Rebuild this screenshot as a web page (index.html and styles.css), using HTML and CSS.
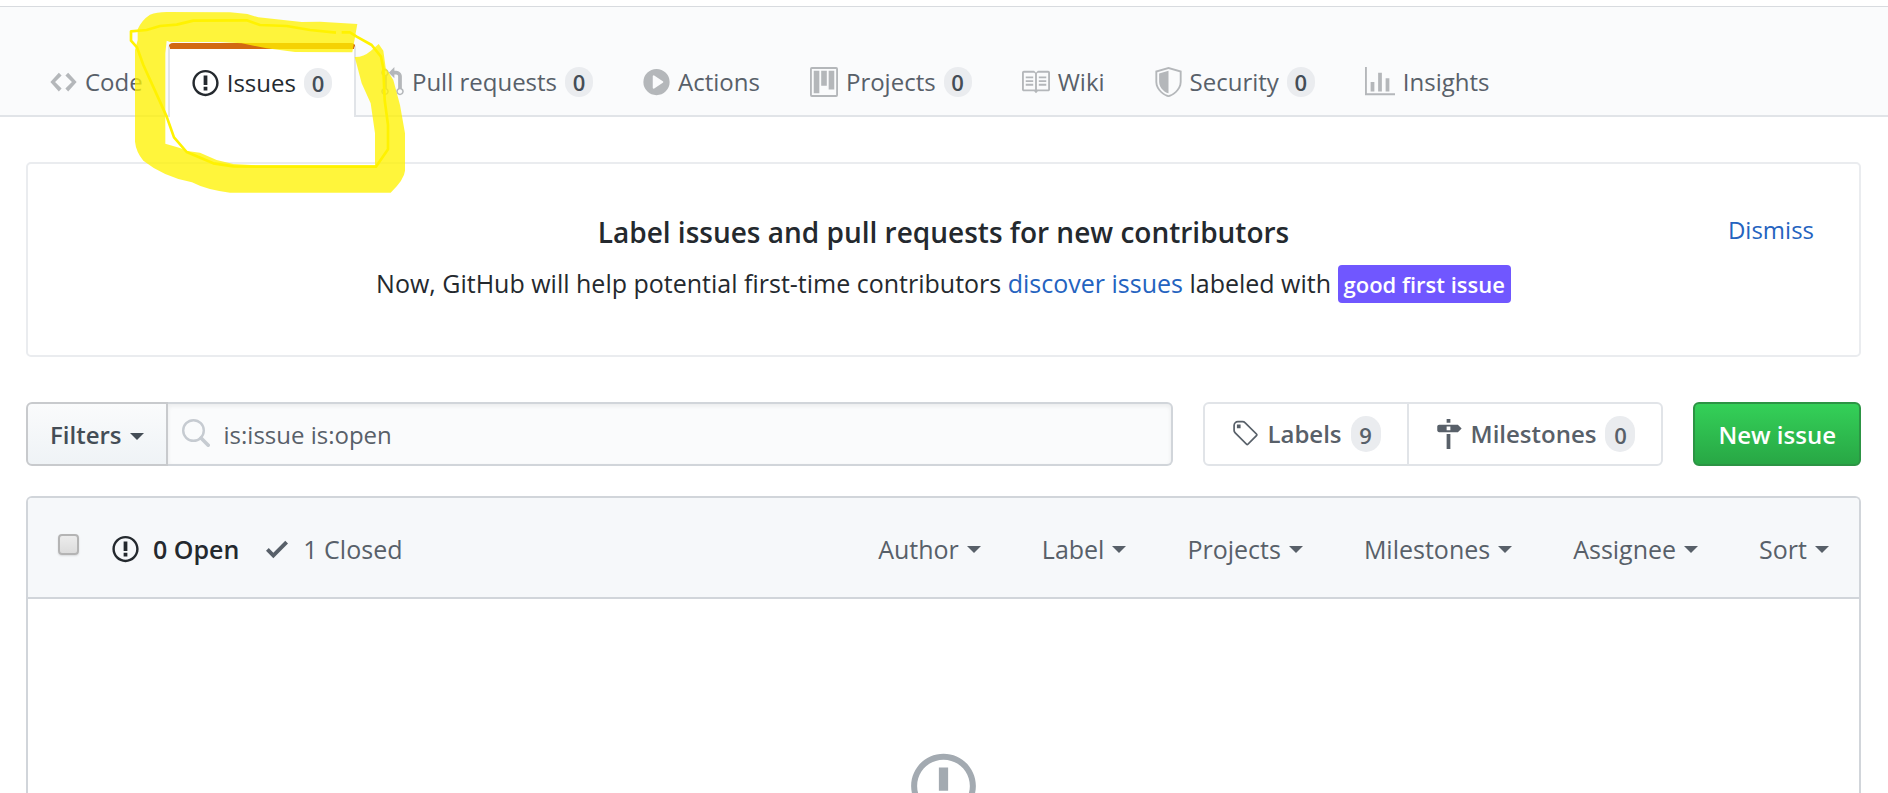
FILE: index.html
```html
<!DOCTYPE html>
<html lang="en">
<head>
<meta charset="utf-8">
<title>Issues</title>
<link rel="stylesheet" href="styles.css">
</head>
<body>
<svg class="sprite" aria-hidden="true">
  <symbol id="code" viewBox="0 0 14 16"><path d="M9.5 3L8 4.5 11.5 8 8 11.5 9.5 13 14 8 9.5 3zm-5 0L0 8l4.5 5L6 11.5 2.5 8 6 4.5 4.5 3z"/></symbol>
  <symbol id="issue" viewBox="0 0 14 16"><path d="M7 2.3c3.14 0 5.7 2.56 5.7 5.7s-2.56 5.7-5.7 5.7A5.71 5.71 0 0 1 1.3 8c0-3.14 2.56-5.7 5.7-5.7zM7 1C3.14 1 0 4.14 0 8s3.14 7 7 7 7-3.14 7-7-3.14-7-7-7zm1 3H6v5h2V4zm0 6H6v2h2v-2z"/></symbol>
  <symbol id="pull" viewBox="0 0 12 16"><path d="M11 11.28V5c-.03-.78-.34-1.47-.94-2.06C9.46 2.35 8.78 2.03 8 2H7V0L4 3l3 3V4h1c.27.02.48.11.69.31.21.2.3.42.31.69v6.28A1.993 1.993 0 0 0 10 15a1.993 1.993 0 0 0 1-3.72zm-1 2.92c-.66 0-1.2-.55-1.2-1.2 0-.65.55-1.2 1.2-1.2.65 0 1.2.55 1.2 1.2 0 .65-.55 1.2-1.2 1.2zM4 3c0-1.11-.89-2-2-2a1.993 1.993 0 0 0-1 3.72v6.56A1.993 1.993 0 0 0 2 15a1.993 1.993 0 0 0 1-3.72V4.72c.59-.34 1-.98 1-1.72zm-.8 10c0 .66-.55 1.2-1.2 1.2-.65 0-1.2-.55-1.2-1.2 0-.65.55-1.2 1.2-1.2.65 0 1.2.55 1.2 1.2zM2 4.2C1.34 4.2.8 3.65.8 3c0-.65.55-1.2 1.2-1.2.65 0 1.2.55 1.2 1.2 0 .65-.55 1.2-1.2 1.2z"/></symbol>
  <symbol id="play" viewBox="0 0 14 16"><path fill-rule="evenodd" d="M14 8A7 7 0 1 1 0 8a7 7 0 0 1 14 0zm-8.223 3.482l4.599-3.066a.5.5 0 0 0 0-.832L5.777 4.518A.5.5 0 0 0 5 4.934v6.132a.5.5 0 0 0 .777.416z"/></symbol>
  <symbol id="project" viewBox="0 0 15 16"><path fill-rule="evenodd" d="M10 12h3V2h-3v10zm-4-2h3V2H6v8zm-4 4h3V2H2v12zm-1 1h13V1H1v14zM14 0H1a1 1 0 0 0-1 1v14a1 1 0 0 0 1 1h13a1 1 0 0 0 1-1V1a1 1 0 0 0-1-1z"/></symbol>
  <symbol id="book" viewBox="1 0 15 16"><path fill-rule="evenodd" d="M3 5h4v1H3V5zm0 3h4V7H3v1zm0 2h4V9H3v1zm11-5h-4v1h4V5zm0 2h-4v1h4V7zm0 2h-4v1h4V9zm2-6v9c0 .55-.45 1-1 1H9.5l-1 1-1-1H2c-.55 0-1-.45-1-1V3c0-.55.45-1 1-1h5.5l1 1 1-1H15c.55 0 1 .45 1 1zm-8 .5L7.5 3H2v9h6V3.5zm7-.5H9.5l-.5.5V12h6V3z"/></symbol>
  <symbol id="shield" viewBox="0 0 14 16"><path fill-rule="evenodd" d="M0 2l7-2 7 2v6.02C14 12.69 8.69 16 7 16c-1.69 0-7-3.31-7-7.98V2zm1 .75L7 1l6 1.75v5.268C13 12.104 8.449 15 7 15c-1.449 0-6-2.896-6-6.982V2.75zm1 .75L7 2v12c-1.207 0-5-2.482-5-5.985V3.5z"/></symbol>
  <symbol id="graph" viewBox="0 0 16 16"><path d="M16 14v1H0V0h1v14h15zM5 13H3V8h2v5zm4 0H7V3h2v10zm4 0h-2V6h2v7z"/></symbol>
  <symbol id="tag" viewBox="0 0 14 16"><path fill-rule="evenodd" d="M7.685 1.72a2.49 2.49 0 0 0-1.76-.726H3.48A2.5 2.5 0 0 0 .994 3.48v2.456c0 .656.269 1.292.726 1.76l6.024 6.024a.99.99 0 0 0 1.402 0l4.563-4.563a.99.99 0 0 0 0-1.402L7.685 1.72zM2.366 7.048A1.54 1.54 0 0 1 1.9 5.925V3.48c0-.874.716-1.58 1.58-1.58h2.456c.418 0 .825.159 1.123.467l6.104 6.094-4.702 4.702-6.094-6.114zm.588-4.105h1.959v1.989H2.954V2.943z"/></symbol>
  <symbol id="milestone" viewBox="0 0 14 16"><path fill-rule="evenodd" d="M8 2H6V0h2v2zm4 5H2c-.55 0-1-.45-1-1V4c0-.55.45-1 1-1h10l2 2-2 2zM8 4H6v2h2V4zM6 16h2V8H6v8z"/></symbol>
  <symbol id="check" viewBox="0 0 12 16"><path d="M12 5l-8 8-4-4 1.5-1.5L4 10l6.5-6.5L12 5z"/></symbol>
  <symbol id="search" viewBox="0 0 28 28"><g fill="none" stroke="currentColor"><circle cx="11.500" cy="11.500" r="10.300" stroke-width="2.400"/><path d="M19 19l7.200 7.200" stroke-width="3.600" stroke-linecap="round"/></g></symbol>
</svg>

<header class="repo-head">
  <nav class="tabs" aria-label="Repository">
    <a class="tab" href="#"><svg class="icon"><use href="#code"/></svg>Code</a>
    <a class="tab tab-current" href="#" aria-current="page"><svg class="icon"><use href="#issue"/></svg>Issues<span class="counter">0</span></a>
    <a class="tab" href="#"><svg class="icon icon-narrow"><use href="#pull"/></svg>Pull requests<span class="counter">0</span></a>
    <a class="tab" href="#"><svg class="icon"><use href="#play"/></svg>Actions</a>
    <a class="tab" href="#"><svg class="icon icon-wide"><use href="#project"/></svg>Projects<span class="counter">0</span></a>
    <a class="tab" href="#"><svg class="icon icon-wide"><use href="#book"/></svg>Wiki</a>
    <a class="tab" href="#"><svg class="icon"><use href="#shield"/></svg>Security<span class="counter">0</span></a>
    <a class="tab" href="#"><svg class="icon icon-widest"><use href="#graph"/></svg>Insights</a>
  </nav>
</header>

<main class="content">
  <section class="notice">
    <button class="dismiss" type="button">Dismiss</button>
    <h2 class="notice-title">Label issues and pull requests for new contributors</h2>
    <p class="notice-text">Now, GitHub will help potential first-time contributors <a class="link" href="#">discover issues</a> labeled with <span class="label">good first issue</span></p>
  </section>

  <div class="toolbar">
    <form class="search">
      <button class="filters" type="button">Filters<span class="caret"></span></button>
      <label class="search-box">
        <svg class="search-icon" aria-hidden="true"><use href="#search"/></svg>
        <input class="search-input" type="text" aria-label="Search all issues" value="is:issue is:open">
      </label>
    </form>
    <nav class="subnav" aria-label="Issue tools">
      <a class="subnav-item" href="#"><svg class="icon"><use href="#tag"/></svg>Labels<span class="counter">9</span></a>
      <a class="subnav-item" href="#"><svg class="icon"><use href="#milestone"/></svg>Milestones<span class="counter">0</span></a>
    </nav>
    <button class="new-issue" type="button">New issue</button>
  </div>

  <section class="issues">
    <div class="issues-head">
      <input class="select-all" type="checkbox" aria-label="Select all issues">
      <a class="state state-open" href="#"><svg class="icon"><use href="#issue"/></svg>0 Open</a>
      <a class="state" href="#"><svg class="icon icon-check"><use href="#check"/></svg>1 Closed</a>
      <div class="menus">
        <button class="menu" type="button">Author<span class="caret"></span></button>
        <button class="menu" type="button">Label<span class="caret"></span></button>
        <button class="menu" type="button">Projects<span class="caret"></span></button>
        <button class="menu" type="button">Milestones<span class="caret"></span></button>
        <button class="menu" type="button">Assignee<span class="caret"></span></button>
        <button class="menu" type="button">Sort<span class="caret"></span></button>
      </div>
    </div>
    <div class="blank"><svg class="blank-icon"><use href="#issue"/></svg></div>
  </section>
</main>

<svg class="marker" viewBox="0 0 1320 630" aria-hidden="true">
  <path class="marker-fill" d="M450 44Q470 36 500 36L690 37L742 42L775 52L905 66L960 65L1072 72L1057 157L885 156L800 145L725 130L660 126L510 126L500 122L496 160V431L540 444L562 453L600 458L650 480L700 492L770 496H1125V400L1112 310L1085 250L1072 200L1064 171Q1090 172 1112 153L1136 132L1150 152L1157 203L1180 240L1200 315L1215 400V512Q1213 538 1172 578H690Q620 570 576 547Q490 530 430 482Q408 455 405 425V150L413 120V88Q425 60 450 44Z"/>
  <path class="marker-line" d="M1025 97H1050L1070 110L1115 135L1143 170L1150 205L1154 300L1164 375V448L1128 500H770L700 499L640 490L560 456L522 412L500 350L470 283L430 195L411 142L393 122V94L440 90L480 78L530 74L580 62L740 61L780 75L860 78L930 90L1008 98"/>
</svg>
</body>
</html>
```

FILE: styles.css
```css
* {
  box-sizing: border-box;
}

body {
  margin: 0;
  height: 100vh;
  overflow: hidden;
  display: flex;
  flex-direction: column;
  position: relative;
  background: #fff;
  color: #24292e;
  font-family: "Open Sans", "Noto Sans", sans-serif;
  font-size: 24px;
  line-height: 36px;
}

a {
  color: inherit;
  text-decoration: none;
}

button,
input {
  font: inherit;
  color: inherit;
}

.sprite {
  position: absolute;
  width: 0;
  height: 0;
}

.icon {
  flex: none;
  width: 27px;
  height: 30px;
  fill: currentColor;
}

.icon-narrow { width: 23px; }
.icon-wide { width: 28px; }
.icon-widest { width: 30px; }

.icon-check {
  width: 22px;
  margin-right: 8px;
}

.counter {
  min-width: 28px;
  padding: 0 7px;
  border-radius: 15px;
  background: #eaecef;
  color: #444d56;
  font-size: 22px;
  font-weight: 600;
  line-height: 30px;
  text-align: center;
}

.caret {
  width: 14px;
  margin-top: 2px;
  border: 7px solid transparent;
  border-top-color: currentColor;
  border-bottom: 0;
}

.repo-head {
  margin-top: 6px;
  padding: 36px 25px 0;
  border-top: 1px solid #d8dbdf;
  background: #fafbfc;
  box-shadow: inset 0 -2px #e1e4e8;
}

.tabs {
  display: flex;
}

.tab {
  display: flex;
  align-items: center;
  gap: 8px;
  height: 74px;
  padding: 4px 24px 0;
  border: 0 solid transparent;
  border-width: 0 1px;
  color: #586069;
  white-space: nowrap;
}

.tab .icon {
  color: #b4b7ba;
}

.tab-current {
  padding: 0 22px;
  border-width: 6px 2px 0;
  border-color: #d26911 #e1e4e8 transparent;
  border-radius: 5px 5px 0 0;
  background: #fff;
  color: #24292e;
}

.tab-current .icon {
  color: inherit;
}

.content {
  flex: 1;
  min-height: 0;
  display: flex;
  flex-direction: column;
  padding: 45px 27px 0 26px;
}

.notice {
  position: relative;
  padding: 47px 44px 52px;
  border: 2px solid #eaecef;
  border-radius: 5px;
  text-align: center;
}

.notice-title {
  margin: 0 0 11px;
  font-size: 28px;
  font-weight: 600;
  line-height: 42px;
}

.notice-text {
  margin: 0;
  font-size: 25px;
  line-height: 38px;
}

.link,
.dismiss {
  color: #2463bf;
}

.dismiss {
  position: absolute;
  top: 48px;
  right: 45px;
  padding: 0;
  border: 0;
  background: none;
}

.label {
  display: inline-block;
  padding: 0 6px;
  border-radius: 4px;
  background: #7057ff;
  color: #fff;
  font-size: 22px;
  font-weight: 600;
}

.toolbar {
  display: flex;
  flex: none;
  gap: 30px;
  height: 64px;
  margin: 45px 0 30px;
}

.search {
  flex: 1;
  display: flex;
}

.filters,
.new-issue {
  border: 2px solid #c8cacd;
  font-weight: 600;
  white-space: nowrap;
}

.filters {
  display: flex;
  align-items: center;
  gap: 8px;
  padding: 2px 22px 0;
  border-radius: 6px 0 0 6px;
  background: linear-gradient(#fafbfc, #eff3f6);
  color: #444d56;
}

.search-box {
  flex: 1;
  display: flex;
  align-items: center;
  gap: 14px;
  padding: 2px 14px 0;
  border: 2px solid #d1d5da;
  border-left: 0;
  border-radius: 0 6px 6px 0;
  background: #fafbfc;
  box-shadow: inset 0 2px 4px rgba(27, 31, 35, 0.07);
}

.search-icon {
  width: 28px;
  height: 28px;
  margin-bottom: 4px;
  color: #c6cbd1;
}

.search-input {
  flex: 1;
  min-width: 0;
  padding: 0;
  border: 0;
  outline: 0;
  background: none;
  color: #586069;
}

.subnav {
  display: flex;
  border: 2px solid #e1e4e8;
  border-radius: 6px;
}

.subnav-item {
  display: flex;
  align-items: center;
  gap: 9px;
  padding: 0 26px;
  color: #586069;
  font-weight: 600;
  white-space: nowrap;
}

.subnav-item + .subnav-item {
  border-left: 2px solid #e1e4e8;
}

.subnav .counter {
  min-width: 30px;
  height: 36px;
  border-radius: 18px;
  color: #586069;
  line-height: 38px;
}

.new-issue {
  padding: 2px 23px 0;
  border-color: #2c9444;
  border-radius: 6px;
  background: linear-gradient(#34d058, #28a745);
  color: #fff;
}

.issues {
  flex: 1;
  min-height: 0;
  display: flex;
  flex-direction: column;
  overflow: hidden;
  border: 2px solid #d1d5da;
  border-bottom: 0;
  border-radius: 6px 6px 0 0;
}

.issues-head {
  display: flex;
  flex: none;
  align-items: center;
  height: 101px;
  padding: 2px 30px 0;
  border-bottom: 2px solid #d1d5da;
  background: #f6f8fa;
  color: #586069;
  font-size: 25px;
}

.select-all {
  appearance: none;
  width: 21px;
  height: 21px;
  margin: 0 33px 8px 0;
  border: 2px solid #b4b4b4;
  border-radius: 4px;
  background: linear-gradient(#ececec, #dcdcdc);
  box-shadow: 0 1px 2px rgba(0, 0, 0, 0.12);
}

.state {
  display: flex;
  align-items: center;
  gap: 7px;
  margin-right: 27px;
  white-space: nowrap;
}

.state-open {
  gap: 14px;
  color: #24292e;
  font-weight: 600;
}

.menus {
  flex: 1;
  display: flex;
  justify-content: flex-end;
  gap: 61px;
}

.menu {
  display: flex;
  align-items: center;
  gap: 8px;
  padding: 0;
  border: 0;
  background: none;
  white-space: nowrap;
}

.blank {
  flex: 1;
  min-height: 0;
  overflow: hidden;
  padding-top: 150px;
  text-align: center;
}

.blank-icon {
  width: 65px;
  height: 74px;
  fill: #a3aab1;
}

.marker {
  position: absolute;
  top: 0;
  left: 0;
  width: 440px;
  height: 210px;
  pointer-events: none;
}

.marker-fill {
  fill: #fff200;
  opacity: 0.77;
}

.marker-line {
  fill: none;
  stroke: #fff200;
  stroke-width: 8;
  stroke-linejoin: round;
}
```
